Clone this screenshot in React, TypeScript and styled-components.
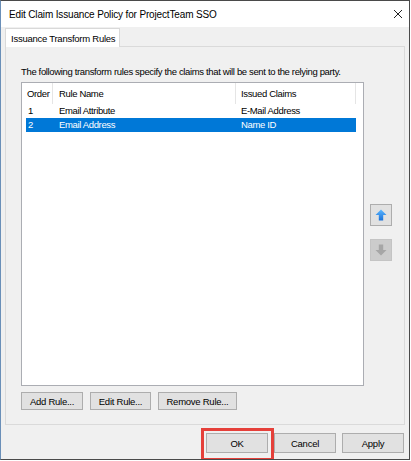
import React from "react";
import styled, { createGlobalStyle } from "styled-components";

const Global = createGlobalStyle`
  html, body { margin: 0; padding: 0; background: #ffffff; }
  body { font-family: "Liberation Sans", Arial, sans-serif; }
  * { box-sizing: border-box; }
`;

const Window = styled.div`
  width: 410px;
  height: 460px;
  border: 1px solid #4a4a4a;
  border-left-color: #6a8fb8;
  background: #f0f0f0;
  display: flex;
  flex-direction: column;
  overflow: hidden;
  font-family: "Liberation Sans", Arial, sans-serif;
  font-size: 9.5px;
  letter-spacing: -0.25px;
  color: #000;
`;

const TitleBar = styled.div`
  flex: none;
  height: 26px;
  background: #ffffff;
  display: flex;
  align-items: center;
  justify-content: space-between;
  padding: 0 6px 0 8px;
`;

const Title = styled.span`
  font-size: 10px;
  letter-spacing: -0.15px;
  color: #000;
`;

const CloseIcon = styled.svg`
  width: 10px;
  height: 10px;
  flex: none;
`;

const Content = styled.div`
  flex: 1;
  display: flex;
  flex-direction: column;
  padding: 1px 4px 0 4px;
  min-height: 0;
`;

const TabStrip = styled.div`
  display: flex;
  flex: none;
`;

const Tab = styled.div`
  position: relative;
  z-index: 1;
  height: 19px;
  margin-bottom: -1px;
  padding: 0 5px;
  display: flex;
  align-items: center;
  background: #ffffff;
  border: 1px solid #d9d9d9;
  border-bottom: none;
  width: 115px;
  white-space: nowrap;
`;

const Panel = styled.div`
  flex: 1;
  display: flex;
  flex-direction: column;
  align-items: flex-start;
  border: 1px solid #dadada;
  padding: 18px 10px 14px 15px;
  background: #f0f0f0;
`;

const Description = styled.div`
  line-height: 14px;
  white-space: nowrap;
  letter-spacing: -0.35px;
`;

const ListArea = styled.div`
  display: flex;
  gap: 6px;
  margin-top: 3px;
`;

const List = styled.div`
  width: 343px;
  height: 304px;
  border: 1px solid #abadb3;
  background: #ffffff;
  display: flex;
  flex-direction: column;
  letter-spacing: -0.35px;
`;

const HeaderRow = styled.div`
  display: grid;
  grid-template-columns: 31px 183px 120px;
  height: 21px;
`;

const HeaderCell = styled.div<{ $pad: number }>`
  border-right: 1px solid #e5e5e5;
  padding-left: ${(p) => p.$pad}px;
  line-height: 21px;
  white-space: nowrap;
  overflow: hidden;
`;

const Row = styled.div<{ $selected?: boolean }>`
  display: grid;
  grid-template-columns: 27px 183px 120px;
  margin-left: 4px;
  width: 330px;
  height: 14px;
  line-height: 14px;
  background: ${(p) => (p.$selected ? "#0078d7" : "transparent")};
  color: ${(p) => (p.$selected ? "#ffffff" : "#000000")};
`;

const Cell = styled.div<{ $pad: number }>`
  padding-left: ${(p) => p.$pad}px;
  white-space: nowrap;
  overflow: hidden;
`;

const SideButtons = styled.div`
  display: flex;
  flex-direction: column;
  justify-content: center;
  gap: 13px;
  padding-bottom: 3px;
`;

const ArrowButton = styled.div<{ $disabled?: boolean }>`
  width: 22px;
  height: 22px;
  display: flex;
  align-items: center;
  justify-content: center;
  background: ${(p) => (p.$disabled ? "#cccccc" : "#e1e1e1")};
  border: 1px solid ${(p) => (p.$disabled ? "#c4c4c4" : "#adadad")};
`;

const ButtonRow = styled.div`
  display: flex;
  gap: 7px;
  margin-top: 6px;
`;

const Button = styled.div<{ $w: number }>`
  width: ${(p) => p.$w}px;
  height: 18px;
  display: flex;
  align-items: center;
  justify-content: center;
  background: #e1e1e1;
  border: 1px solid #adadad;
  white-space: nowrap;
`;

const Footer = styled.div`
  flex: none;
  height: 35px;
  display: flex;
  justify-content: flex-end;
  align-items: flex-start;
  gap: 6px;
  padding: 9px 5px 0 0;
`;

const DialogButton = styled.div`
  width: 62px;
  height: 20px;
  display: flex;
  align-items: center;
  justify-content: center;
  background: #e1e1e1;
  border: 1px solid #adadad;
`;

const Highlighted = styled.div`
  position: relative;
  &::after {
    content: "";
    position: absolute;
    top: -5px;
    left: -5px;
    right: -6px;
    bottom: -8px;
    border: 3px solid #e5403a;
    pointer-events: none;
  }
`;

const UpArrow = () => (
  <svg width="12" height="12" viewBox="0 0 12 12">
    <defs>
      <linearGradient id="upg" x1="0" y1="0" x2="0" y2="1">
        <stop offset="0" stopColor="#5cb6ff" />
        <stop offset="1" stopColor="#1a72d9" />
      </linearGradient>
    </defs>
    <path d="M6 0.5 L11.5 6 H8.2 V11.5 H3.8 V6 H0.5 Z" fill="url(#upg)" />
  </svg>
);

const DownArrow = () => (
  <svg width="12" height="12" viewBox="0 0 12 12">
    <path d="M6 11.5 L11.5 6 H8.2 V0.5 H3.8 V6 H0.5 Z" fill="#a6a6a6" />
  </svg>
);

const rules = [
  { order: "1", name: "Email Attribute", claims: "E-Mail Address", selected: false },
  { order: "2", name: "Email Address", claims: "Name ID", selected: true },
];

export default function App() {
  return (
    <>
      <Global />
      <Window>
        <TitleBar>
          <Title>Edit Claim Issuance Policy for ProjectTeam SSO</Title>
          <CloseIcon viewBox="0 0 10 10">
            <path d="M1 1 L9 9 M9 1 L1 9" stroke="#222" strokeWidth="1" fill="none" />
          </CloseIcon>
        </TitleBar>
        <Content>
          <TabStrip>
            <Tab>Issuance Transform Rules</Tab>
          </TabStrip>
          <Panel>
            <Description>
              The following transform rules specify the claims that will be sent to the relying party.
            </Description>
            <ListArea>
              <List>
                <HeaderRow>
                  <HeaderCell $pad={5}>Order</HeaderCell>
                  <HeaderCell $pad={6}>Rule Name</HeaderCell>
                  <HeaderCell $pad={5}>Issued Claims</HeaderCell>
                </HeaderRow>
                {rules.map((r) => (
                  <Row key={r.order} $selected={r.selected}>
                    <Cell $pad={2}>{r.order}</Cell>
                    <Cell $pad={6}>{r.name}</Cell>
                    <Cell $pad={5}>{r.claims}</Cell>
                  </Row>
                ))}
              </List>
              <SideButtons>
                <ArrowButton>
                  <UpArrow />
                </ArrowButton>
                <ArrowButton $disabled>
                  <DownArrow />
                </ArrowButton>
              </SideButtons>
            </ListArea>
            <ButtonRow>
              <Button $w={62}>Add Rule...</Button>
              <Button $w={61}>Edit Rule...</Button>
              <Button $w={79}>Remove Rule...</Button>
            </ButtonRow>
          </Panel>
        </Content>
        <Footer>
          <Highlighted>
            <DialogButton>OK</DialogButton>
          </Highlighted>
          <DialogButton>Cancel</DialogButton>
          <DialogButton>Apply</DialogButton>
        </Footer>
      </Window>
    </>
  );
}
